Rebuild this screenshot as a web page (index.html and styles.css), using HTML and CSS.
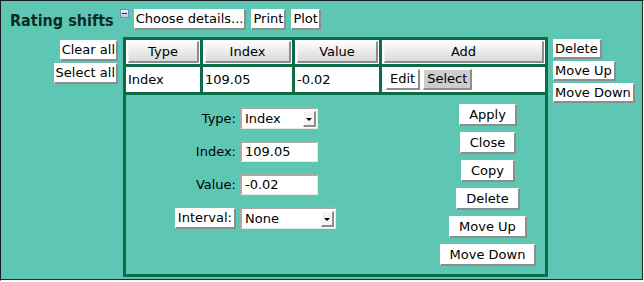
FILE: index.html
```html
<!DOCTYPE html>
<html lang="en">

<head>
    <meta charset="UTF-8">
    <meta name="viewport" content="width=device-width, initial-scale=1.0">
    <title>Rating shifts</title>
    <link rel="stylesheet" href="styles.css">
</head>

<body>
    <div class="panel">
        <div class="head">
            <h2 class="title">Rating shifts</h2>
            <span class="collapse"><span class="dash"></span></span>
            <button class="btn">Choose details...</button>
            <button class="btn">Print</button>
            <button class="btn">Plot</button>
        </div>
        <div class="main">
            <div class="side side-left">
                <button class="btn">Clear all</button>
                <button class="btn">Select all</button>
            </div>
            <table class="grid">
                <tr class="hdr">
                    <th class="c1"><button class="hbtn">Type</button></th>
                    <th class="c2"><button class="hbtn">Index</button></th>
                    <th class="c3"><button class="hbtn">Value</button></th>
                    <th class="c4"><button class="hbtn">Add</button></th>
                </tr>
                <tr class="row">
                    <td>Index</td>
                    <td>109.05</td>
                    <td>-0.02</td>
                    <td class="ops"><button class="btn">Edit</button><button class="btn sel">Select</button></td>
                </tr>
                <tr>
                    <td colspan="4" class="detail">
                        <div class="detail-in">
                            <div class="form">
                                <label>Type:</label>
                                <div class="dd"><span>Index</span><span class="arr"></span></div>
                                <label>Index:</label>
                                <div class="inp">109.05</div>
                                <label>Value:</label>
                                <div class="inp">-0.02</div>
                                <button class="btn lbl">Interval:</button>
                                <div class="dd wide"><span>None</span><span class="arr"></span></div>
                            </div>
                            <div class="actions">
                                <button class="btn act">Apply</button>
                                <button class="btn act">Close</button>
                                <button class="btn act">Copy</button>
                                <button class="btn act">Delete</button>
                                <button class="btn act">Move Up</button>
                                <button class="btn act">Move Down</button>
                            </div>
                        </div>
                    </td>
                </tr>
            </table>
            <div class="side side-right">
                <button class="btn">Delete</button>
                <button class="btn">Move Up</button>
                <button class="btn">Move Down</button>
            </div>
        </div>
    </div>
</body>

</html>
```

FILE: styles.css
```css
* {
    margin: 0px;
    padding: 0px;
    box-sizing: border-box;
}

html,
body {
    background-color: #fff;
}

body {
    font-family: "DejaVu Sans", sans-serif;
    font-size: 13px;
    color: #000;
}

.panel {
    width: 644px;
    height: 281px;
    background-color: #5ec7b4;
    border: 1px solid;
    border-color: #1a1a1a #f4f4f4 #f4f4f4 #1a1a1a;
    box-shadow: inset -1px -1px 0 #2a2a2a;
}

.head {
    display: flex;
    align-items: flex-start;
    height: 36px;
    padding: 8px 0 0 9px;
}

.title {
    font-family: "DejaVu Sans Condensed", "DejaVu Sans", sans-serif;
    font-stretch: semi-condensed;
    font-size: 16px;
    font-weight: bold;
    line-height: 19px;
    margin-top: 2px;
    color: #0d2b24;
}

.collapse {
    display: flex;
    justify-content: center;
    align-items: center;
    width: 9px;
    height: 9px;
    margin: 0 5px 0 6px;
    border: 1px solid #6f8fb5;
    background: linear-gradient(#eef4fc, #b4c8e6);
}

.dash {
    width: 5px;
    height: 1px;
    background-color: #1d2f55;
}

.btn {
    font-family: "DejaVu Sans", sans-serif;
    font-size: 13px;
    line-height: 16px;
    color: #000;
    background-color: #fff;
    border-style: solid;
    border-width: 1px 2px 2px 1px;
    border-color: #fff #8d8d8d #8d8d8d #fff;
    padding: 1px 1px;
    white-space: nowrap;
}

.head .btn {
    margin-right: 5px;
}

.main {
    display: flex;
    align-items: flex-start;
}

.side {
    display: flex;
    flex-direction: column;
    gap: 2px;
}

.side-left {
    width: 122px;
    align-items: flex-end;
    padding-top: 3px;
    padding-right: 5px;
}

.side-right {
    align-items: flex-start;
    margin-left: 5px;
    padding-top: 2px;
}

.side-right .btn {
    line-height: 15px;
    padding: 1px 2px 1px 1px;
}

.grid {
    border-collapse: separate;
    border-spacing: 3px;
    background-color: #0c6c48;
    table-layout: fixed;
    width: 425px;
}

.grid th,
.grid td {
    background-color: #fff;
    text-align: left;
    font-weight: normal;
}

.c1 { width: 74px; }
.c2 { width: 89px; }
.c3 { width: 84px; }
.c4 { width: 163px; }

.hdr th {
    height: 24px;
    padding: 1px 1px 1px 2px;
}

.hbtn {
    display: block;
    width: 100%;
    height: 22px;
    font-family: "DejaVu Sans", sans-serif;
    font-size: 13px;
    color: #000;
    background: linear-gradient(#fcfcfc, #dadada);
    border-style: solid;
    border-width: 1px 2px 2px 1px;
    border-color: #fff #8d8d8d #8d8d8d #f2f2f2;
}

.row td {
    height: 25px;
    padding: 0 2px;
    vertical-align: middle;
    white-space: nowrap;
}

.row .ops {
    padding-left: 4px;
}

.ops .btn {
    margin-right: 3px;
    padding: 1px 3px;
}

.sel {
    background-color: #cdcdcd;
}

.grid .detail {
    background-color: #5ec7b4;
    padding: 9px 0 8px 0;
    vertical-align: top;
}

.detail-in {
    display: flex;
    align-items: flex-start;
}

.form {
    display: grid;
    grid-template-columns: 110px auto;
    column-gap: 4px;
    row-gap: 12px;
    align-items: center;
    margin-top: 3px;
}

.form label,
.form .lbl {
    justify-self: end;
}

.lbl {
    padding: 1px 2px;
}

.inp,
.dd {
    width: 78px;
    height: 21px;
    background-color: #fff;
    border-style: solid;
    border-width: 2px 1px 1px 2px;
    border-color: #a9a9a9 #e6e6e6 #e6e6e6 #a9a9a9;
    padding: 0 3px;
    line-height: 18px;
}

.dd {
    height: 22px;
    display: flex;
    align-items: center;
    justify-content: space-between;
    padding-right: 1px;
}

.dd.wide {
    width: 96px;
}

.arr {
    display: flex;
    justify-content: center;
    align-items: center;
    width: 13px;
    height: 16px;
    background-color: #f4f4f4;
    border-style: solid;
    border-width: 1px 2px 2px 1px;
    border-color: #fff #8d8d8d #8d8d8d #fff;
}

.arr::after {
    content: "";
    border-left: 3px solid transparent;
    border-right: 3px solid transparent;
    border-top: 3px solid #000;
    margin-top: 2px;
}

.actions {
    margin-left: auto;
    width: 114px;
    display: flex;
    flex-direction: column;
    align-items: center;
    gap: 6px;
}

.act {
    line-height: 15px;
    padding: 2px 9px;
}
```
